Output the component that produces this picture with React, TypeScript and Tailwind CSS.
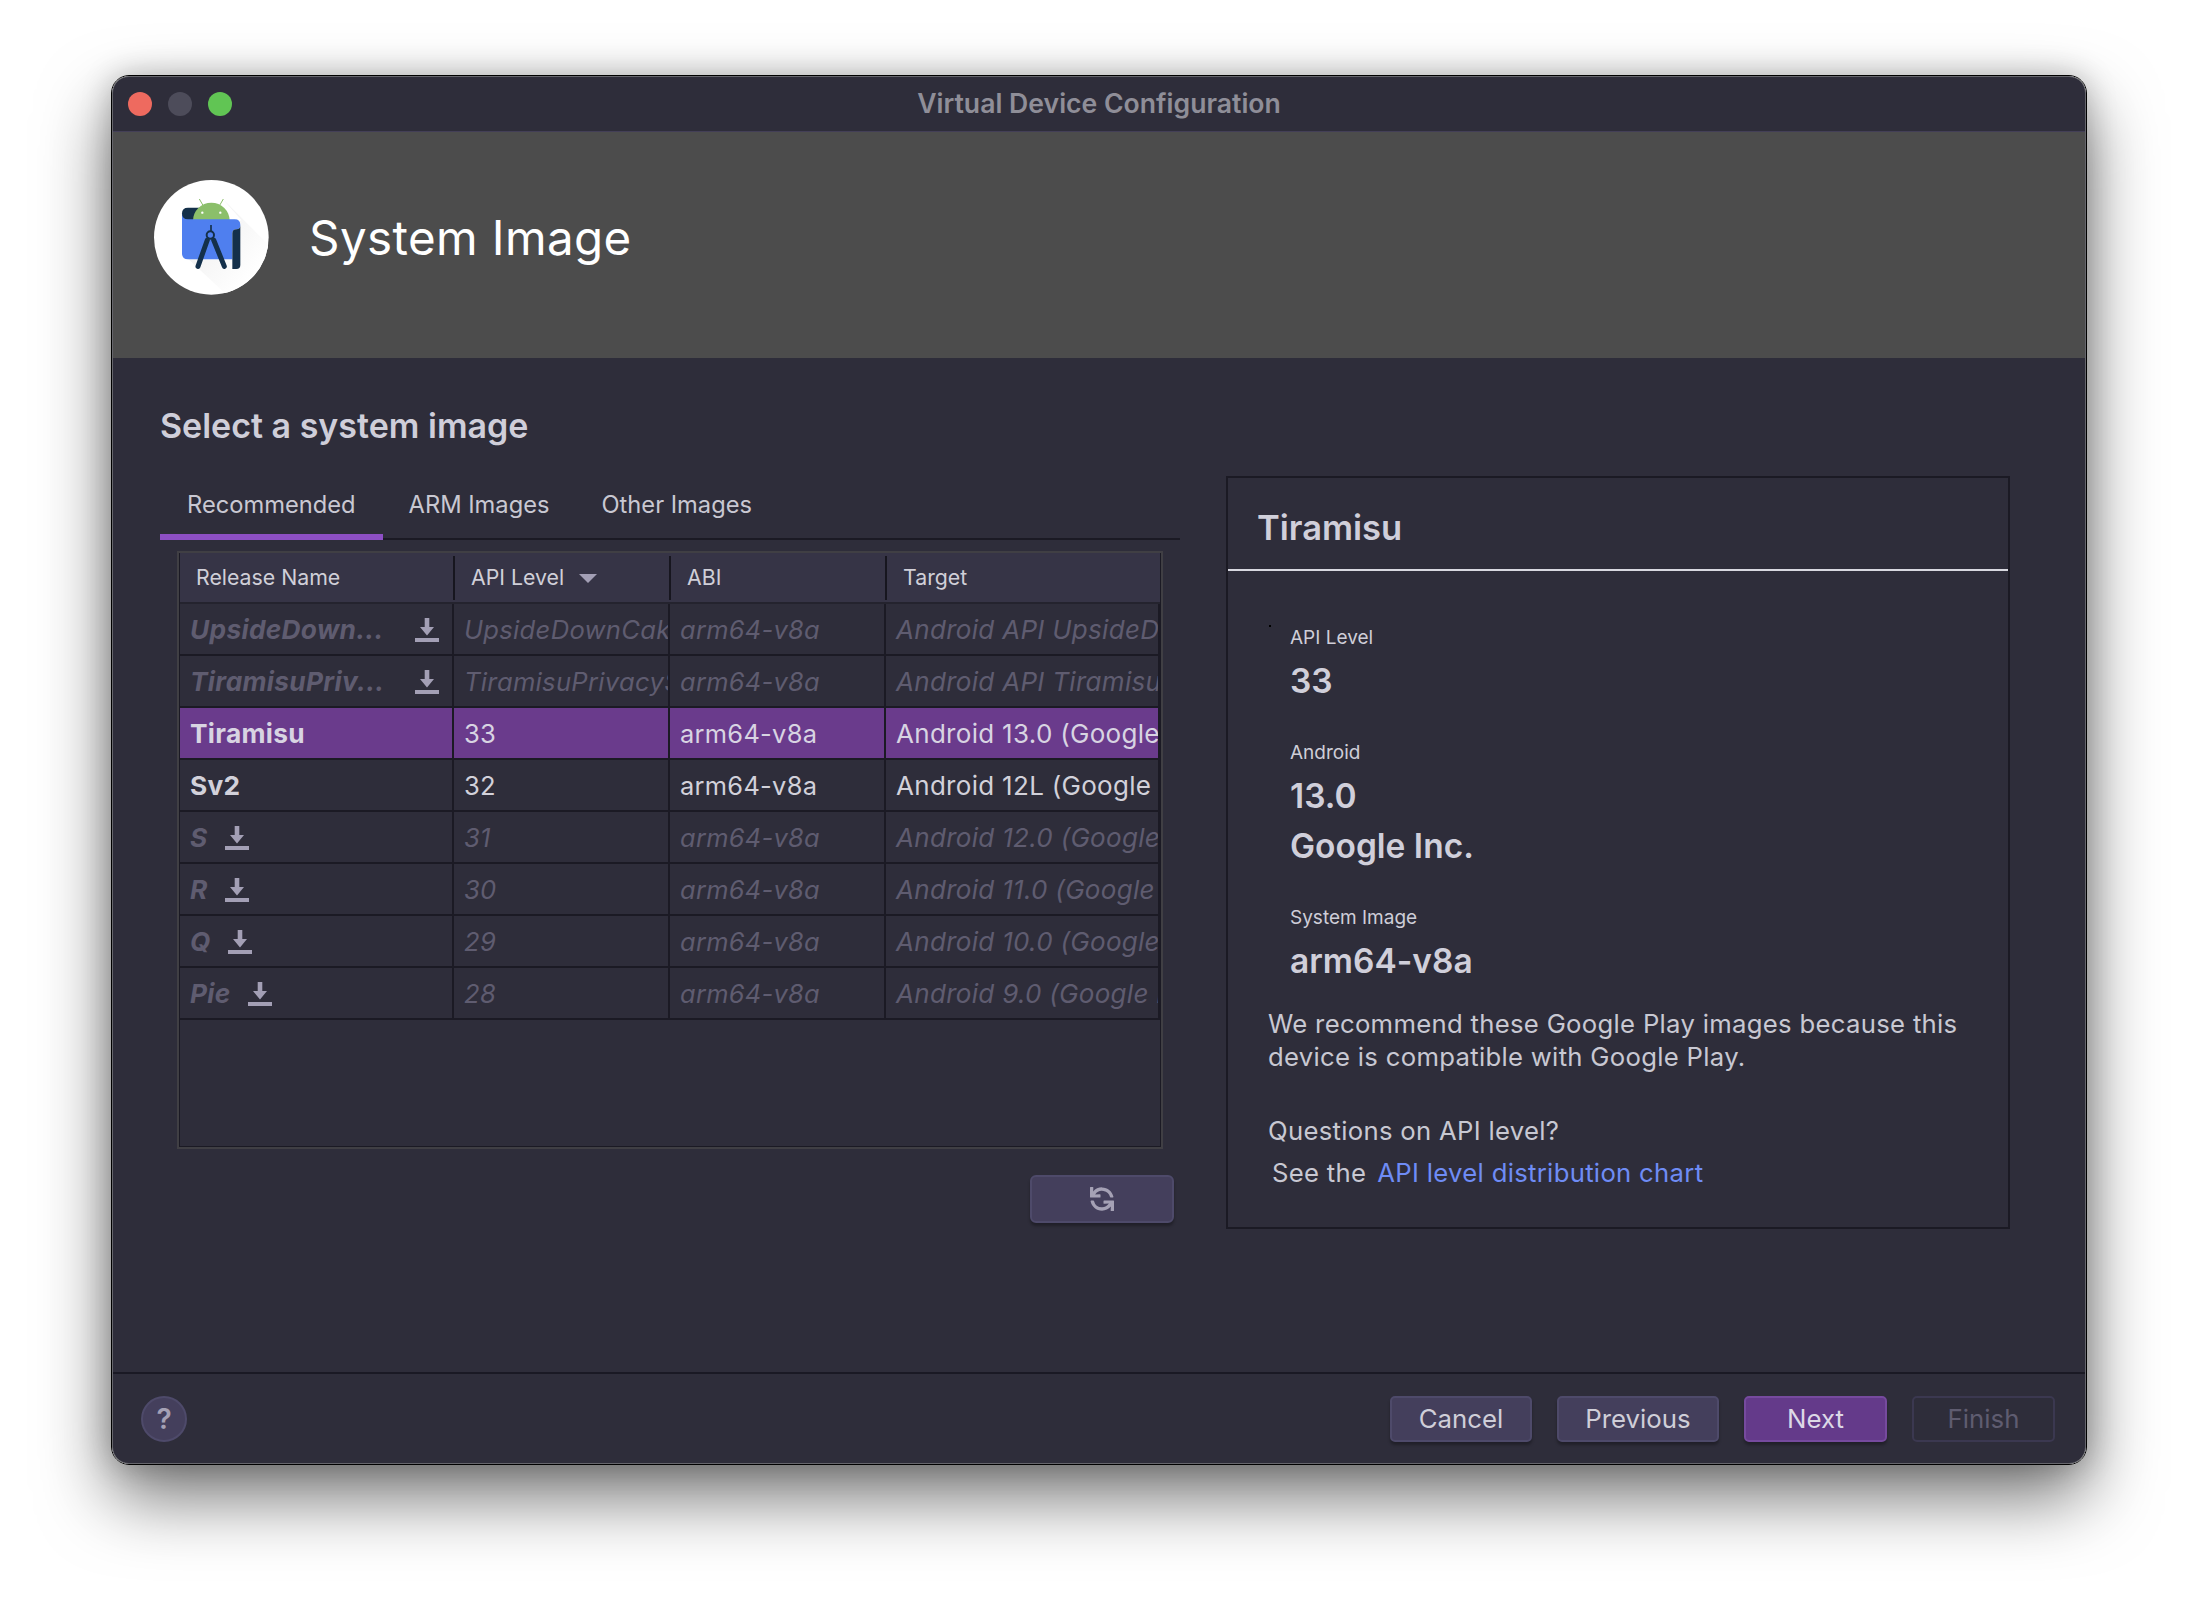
import React from 'react';
import { FaSync } from 'react-icons/fa';

type Row = {
  name: string;
  api: string;
  target: string;
  mode: 'off' | 'on' | 'selected';
  pinned?: boolean;
};

const rows: Row[] = [
  { name: 'UpsideDown...', api: 'UpsideDownCake', target: 'Android API UpsideDownCake (Google Play)', mode: 'off', pinned: true },
  { name: 'TiramisuPriv...', api: 'TiramisuPrivacySandbox', target: 'Android API TiramisuPrivacySandbox', mode: 'off', pinned: true },
  { name: 'Tiramisu', api: '33', target: 'Android 13.0 (Google Play)', mode: 'selected' },
  { name: 'Sv2', api: '32', target: 'Android 12L (Google Play)', mode: 'on' },
  { name: 'S', api: '31', target: 'Android 12.0 (Google Play)', mode: 'off' },
  { name: 'R', api: '30', target: 'Android 11.0 (Google Play)', mode: 'off' },
  { name: 'Q', api: '29', target: 'Android 10.0 (Google Play)', mode: 'off' },
  { name: 'Pie', api: '28', target: 'Android 9.0 (Google Play)', mode: 'off' },
];

function DownloadIcon() {
  return (
    <svg width="24" height="24" viewBox="0 0 24 24" className="shrink-0 fill-[#a39fb5]">
      <path d="M9.7 0h4.6v9H19l-7 8.6L5 9h4.7z" />
      <rect x="0" y="20" width="24" height="4" />
    </svg>
  );
}

function StudioLogo() {
  return (
    <svg width="115" height="115" viewBox="43 30 345 345" className="shrink-0">
      <defs>
        <clipPath id="disc">
          <circle cx="215" cy="202" r="172" />
        </clipPath>
        <linearGradient id="fade" x1="0" y1="0" x2="1" y2="1">
          <stop offset="0" stopColor="#ebebeb" />
          <stop offset="0.7" stopColor="#ffffff" />
        </linearGradient>
      </defs>
      <circle cx="215" cy="202" r="172" fill="#ffffff" />
      <polygon clipPath="url(#disc)" points="250,88 420,258 420,420 310,420 140,262 305,150" fill="url(#fade)" />
      <path d="M127 130Q127 113 145 113H190V170H127Z" fill="#14304a" />
      <path d="M179 87L190 106M251 87L240 106" stroke="#8bbf6a" strokeWidth="3" />
      <path d="M160 152A55 54 0 0 1 270 152Z" fill="#8bbf6a" />
      <circle cx="188" cy="128" r="3.5" fill="#ffffff" />
      <circle cx="242" cy="128" r="3.5" fill="#ffffff" />
      <path d="M127 130Q127 148 145 148H285Q302 148 302 165Q302 178 290 178Q278 178 278 190V268H145Q127 268 127 250Z" fill="#4f7fef" />
      <path d="M278 190Q278 178 290 178Q302 178 302 165V285Q302 297 290 297H278Z" fill="#14304a" />
      <path d="M214 165V184" stroke="#14304a" strokeWidth="5" />
      <circle cx="212" cy="195" r="11" fill="none" stroke="#14304a" strokeWidth="6" />
      <path d="M203 210L175 289M222 210L254 289" stroke="#14304a" strokeWidth="15" strokeLinecap="round" fill="none" />
    </svg>
  );
}

function TableRow({ row }: { row: Row }) {
  const bg = row.mode === 'selected' ? 'bg-[#6a3b8c]' : '';
  const text =
    row.mode === 'selected'
      ? 'text-[#d8d4e2]'
      : row.mode === 'on'
        ? 'text-[#d2d1da]'
        : 'text-[#5f5c70] italic';
  const cell = `h-[52px] border-r-2 border-b-2 border-[#1b1a24] overflow-hidden whitespace-nowrap pt-[1px] pl-[10px] leading-[49px] tracking-[0.3px] ${bg} ${text}`;

  return (
    <div className="flex">
      <div className={`${cell} w-[274px] flex items-center font-bold text-[26.3px] ${row.pinned ? 'justify-between pr-[13px]' : 'gap-[17px]'}`}>
        <span>{row.name}</span>
        {row.mode === 'off' && <DownloadIcon />}
      </div>
      <div className={`${cell} w-[216px] text-[25.6px]`}>{row.api}</div>
      <div className={`${cell} w-[216px] text-[25.4px]`}>arm64-v8a</div>
      <div className={`${cell} w-[274px] text-[26px]`}>{row.target}</div>
    </div>
  );
}

function HeaderCell({ label, width, last, sorted }: { label: string; width: string; last?: boolean; sorted?: boolean }) {
  return (
    <div className={`${width} h-full flex items-center justify-between`}>
      <div className="flex items-center pl-[16px] pt-[1px] text-[21.3px] text-[#d0cfd8]">
        {label}
        {sorted && <span className="ml-[15px] w-0 h-0 border-x-[9px] border-x-transparent border-t-[9px] border-t-[#a39fb5]" />}
      </div>
      {!last && <div className="w-[2px] h-[44px] bg-[#17161f]" />}
    </div>
  );
}

function Spec({ label, values, first }: { label: string; values: string[]; first?: boolean }) {
  return (
    <div className={first ? '' : 'mt-[40px]'}>
      <div className="text-[19px] leading-[24px] text-[#cfced8]">{label}</div>
      {values.map((value, i) => (
        <div key={value} className={`${i === 0 ? 'mt-[11px]' : 'mt-[10px]'} text-[33.5px] leading-[40px] font-semibold text-[#d0cfda]`}>
          {value}
        </div>
      ))}
    </div>
  );
}

function FooterButton({ label, width, tone }: { label: string; width: string; tone: 'plain' | 'primary' | 'disabled' }) {
  const toneClass =
    tone === 'primary'
      ? 'bg-[#643a8a] border-[#764a9e] text-[#dcd8e6] shadow-[0_3px_3px_rgba(0,0,0,0.3)]'
      : tone === 'disabled'
        ? 'border-[#3b3850] text-[#5f5c70]'
        : 'bg-[#443f5c] border-[#4e4a6a] text-[#cfced8] shadow-[0_3px_3px_rgba(0,0,0,0.3)]';
  return (
    <button className={`${width} h-[46px] rounded-[5px] border-2 text-[25.8px] leading-none ${toneClass}`}>
      {label}
    </button>
  );
}

export default function App() {
  return (
    <div className="w-[2198px] h-[1614px] bg-white pt-[75px] pl-[111px] font-['Inter',sans-serif] overflow-hidden">
      <div className="w-[1976px] h-[1390px] rounded-[18px] border border-black shadow-[0_32px_70px_rgba(0,0,0,0.55),0_0_30px_rgba(0,0,0,0.22)]">
        <div className="h-full rounded-[17px] border border-[#66666c] overflow-hidden bg-[#2e2d3a] flex flex-col">
          {/* Title bar */}
          <div className="relative h-[55px] shrink-0 border-b border-[#433f57] flex items-center pl-[15px] gap-[16px]">
            <span className="w-[24px] h-[24px] rounded-full bg-[#ee6a5f]" />
            <span className="w-[24px] h-[24px] rounded-full bg-[#4d4c5a]" />
            <span className="w-[24px] h-[24px] rounded-full bg-[#61c554]" />
            <div className="absolute inset-0 flex items-center justify-center text-[26.6px] font-semibold text-[#8f8e98]">
              Virtual Device Configuration
            </div>
          </div>

          {/* Banner */}
          <div className="h-[226px] shrink-0 bg-[#4c4c4c] flex items-center pl-[41px] gap-[40px] pb-[16px]">
            <StudioLogo />
            <div className="pt-[2px] text-[47.5px] text-white tracking-[0.4px]">System Image</div>
          </div>

          {/* Body */}
          <div className="flex-1 pl-[47px]">
            <div className="h-[119px] pt-[50px] text-[34px] leading-[36px] font-semibold text-[#cfced9]">
              Select a system image
            </div>
            <div className="flex items-start">
              <div className="w-[1020px]">
                <div className="flex h-[63px] border-b-2 border-[#1b1a24]">
                  <div className="h-[63px] px-[27px] pt-[14px] text-[23.7px] leading-[28px] text-[#c9c8d2] border-b-[6px] border-[#8d4fc4]">Recommended</div>
                  <div className="h-[61px] px-[26px] pt-[14px] text-[23.7px] leading-[28px] text-[#c9c8d2]">ARM Images</div>
                  <div className="h-[61px] px-[26px] pt-[14px] text-[23.7px] leading-[28px] text-[#c9c8d2]">Other Images</div>
                </div>

                <div className="ml-[17px] mt-[11px] w-[986px] h-[598px] border-2 border-[#403f44]">
                  <div className="h-full border border-[#1b1a24]">
                    <div className="h-[51px] -mt-px flex bg-[#363446] border-b-2 border-[#24232e]">
                      <HeaderCell label="Release Name" width="w-[275px]" />
                      <HeaderCell label="API Level" width="w-[216px]" sorted />
                      <HeaderCell label="ABI" width="w-[216px]" />
                      <HeaderCell label="Target" width="w-[273px]" last />
                    </div>
                    {rows.map(row => (
                      <TableRow key={row.name} row={row} />
                    ))}
                  </div>
                </div>

                <div className="flex justify-end pr-[6px] mt-[26px]">
                  <button className="w-[144px] h-[48px] rounded-[6px] border-2 border-[#4e4a6a] bg-[#443f5c] shadow-[0_3px_3px_rgba(0,0,0,0.3)] flex items-center justify-center">
                    <FaSync className="w-[24px] h-[24px] text-[#a5a1b5] -scale-x-100" />
                  </button>
                </div>
              </div>

              {/* Details panel */}
              <div className="relative ml-[46px] -mt-px w-[784px] h-[753px] border-2 border-[#1b1a24]">
                <span className="absolute left-[41px] top-[147px] w-[2px] h-[2px] bg-black" />
                <div className="h-[93px] pl-[29px] pt-[30px] border-b-2 border-[#d8d8e0] text-[34.5px] leading-[40px] font-semibold text-[#d0cfda]">
                  Tiramisu
                </div>
                <div className="pl-[62px] pt-[55px]">
                  <Spec first label="API Level" values={['33']} />
                  <Spec label="Android" values={['13.0', 'Google Inc.']} />
                  <Spec label="System Image" values={['arm64-v8a']} />
                  <div className="-ml-[22px] mt-[26px] text-[25.7px] leading-[33px] text-[#c8c8d2] tracking-[0.3px]">
                    We recommend these Google Play images because this
                    <br />
                    device is compatible with Google Play.
                    <div className="mt-[41px]">Questions on API level?</div>
                    <div className="mt-[9px] pl-[4px] flex gap-[11px]">
                      <span>See the</span>
                      <span className="text-[#6f8cf5]">API level distribution chart</span>
                    </div>
                  </div>
                </div>
              </div>
            </div>
          </div>

          {/* Footer */}
          <div className="h-[91px] shrink-0 border-t-2 border-[#1a1924] flex items-start justify-between pt-[22px] pl-[28px] pr-[30px]">
            <div className="w-[46px] h-[46px] rounded-full border-2 border-[#4e4a6a] bg-[#443f5c] flex items-center justify-center text-[28px] font-semibold text-[#a5a1b5]">
              ?
            </div>
            <div className="flex gap-[25px]">
              <FooterButton label="Cancel" width="w-[142px]" tone="plain" />
              <FooterButton label="Previous" width="w-[162px]" tone="plain" />
              <FooterButton label="Next" width="w-[143px]" tone="primary" />
              <FooterButton label="Finish" width="w-[143px]" tone="disabled" />
            </div>
          </div>
        </div>
      </div>
    </div>
  );
}
